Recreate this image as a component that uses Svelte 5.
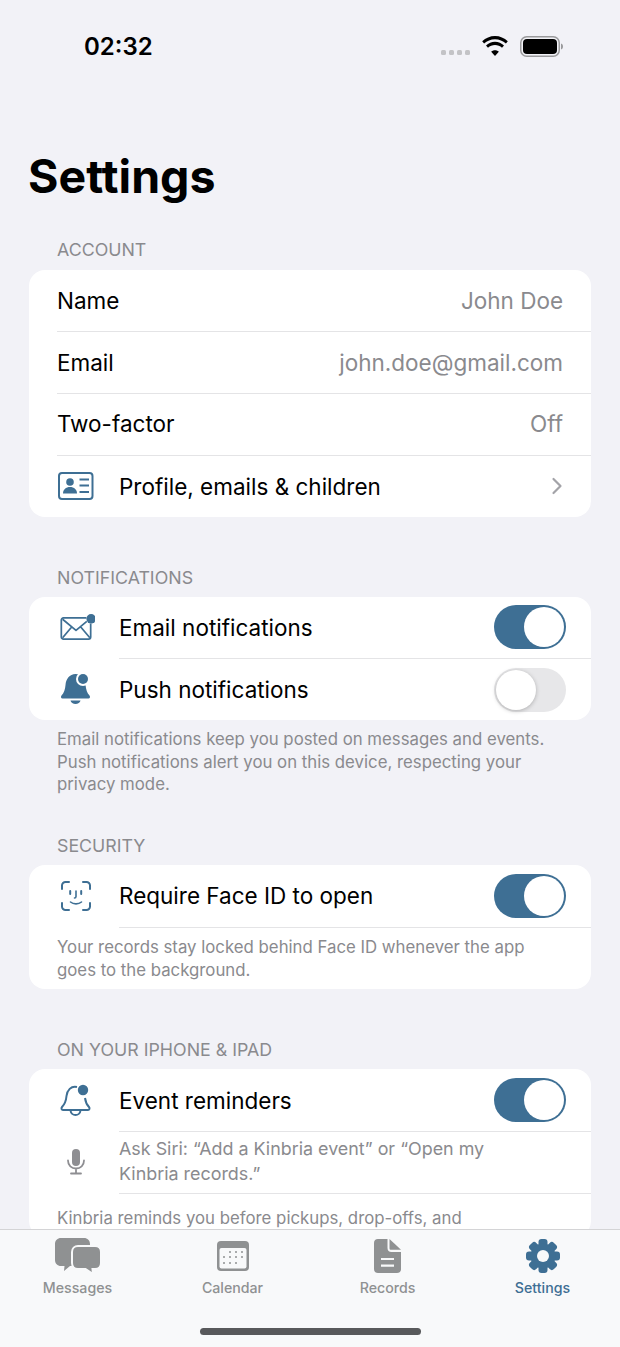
<script lang="ts">
	const tabs = [
		{ id: "messages", label: "Messages" },
		{ id: "calendar", label: "Calendar" },
		{ id: "records", label: "Records" },
		{ id: "settings", label: "Settings", active: true },
	];

	const calendarDots = [
		[13, 11], [19, 11], [25, 11],
		[7, 16], [13, 16], [19, 16], [25, 16],
		[7, 22], [13, 22], [19, 22],
	];
</script>

{#snippet toggle(on: boolean)}
	<span class="toggle" class:on><span class="knob"></span></span>
{/snippet}

<div class="screen">
	<div class="scroll">
		<div class="status">
			<span class="time">02:32</span>
			<span class="status-icons">
				<span class="dots"><i></i><i></i><i></i><i></i></span>
				<svg class="wifi" width="28" height="20" viewBox="0 0 28 20">
					<path d="M14 3.200c4.200 0 8 1.600 10.900 4.300l1.900-2.200C23.400 2 18.900 0 14 0S4.600 2 1.200 5.300l1.900 2.200C6 4.800 9.800 3.200 14 3.200z" />
					<path d="M14 9c2.700 0 5.100 1 7 2.700l2-2.200C20.500 7.200 17.400 5.800 14 5.800S7.500 7.200 5 9.500l2 2.200C8.900 10 11.300 9 14 9z" />
					<path d="M14 20l3.800-4.200c-1-1-2.300-1.500-3.800-1.500s-2.800.5-3.800 1.500z" />
				</svg>
				<svg class="battery" width="44" height="21" viewBox="0 0 44 21">
					<rect x="0.750" y="0.750" width="38.500" height="19.500" rx="6" fill="none" stroke="#9a9a9c" stroke-width="1.500" />
					<rect x="3" y="3" width="34" height="15" rx="4" fill="#000" />
					<path d="M41 7.500c1.300.4 2 1.500 2 3s-.7 2.600-2 3z" fill="#9a9a9c" />
				</svg>
			</span>
		</div>

		<h1>Settings</h1>

		<h2 class="first">ACCOUNT</h2>
		<section class="card">
			<div class="row">
				<div class="inner"><span class="label">Name</span><span class="value">John Doe</span></div>
			</div>
			<div class="row">
				<div class="inner"><span class="label">Email</span><span class="value">john.doe@gmail.com</span></div>
			</div>
			<div class="row">
				<div class="inner"><span class="label">Two-factor</span><span class="value">Off</span></div>
			</div>
			<div class="row">
				<span class="icon">
					<svg width="38" height="28" viewBox="0 0 38 28" fill="none" stroke="#3e6f94" stroke-width="2">
						<rect x="2" y="1" width="33.500" height="26" rx="3" />
						<circle cx="13" cy="10" r="3.800" fill="#3e6f94" stroke="none" />
						<path d="M6 21.500c0-4 3-6.500 7-6.500s7 2.500 7 6.500z" fill="#3e6f94" stroke="none" />
						<path d="M22.500 7.500h9.500M22.500 13.500h9.500M22.500 20h9.500" />
					</svg>
				</span>
				<div class="inner last">
					<span class="label">Profile, emails &amp; children</span>
					<svg class="chevron" width="12" height="18" viewBox="0 0 12 18" fill="none" stroke="#a3a3a8" stroke-width="2.200" stroke-linecap="round" stroke-linejoin="round">
						<path d="M2.500 2l7 7-7 7" />
					</svg>
				</div>
			</div>
		</section>

		<h2>NOTIFICATIONS</h2>
		<section class="card">
			<div class="row">
				<span class="icon">
					<svg width="44" height="30" viewBox="-4 0 44 30" fill="none" stroke="#3e6f94" stroke-width="2" stroke-linejoin="round">
						<path d="M30 4.500H3.500a2.500 2.500 0 0 0-2.500 2.500v19.500a2.500 2.500 0 0 0 2.500 2.500H32.500a2.500 2.500 0 0 0 2.500-2.500V11" />
						<path d="M2.500 6l15.500 13L30.500 8.500M2.500 27.500l10.500-12.500M34 27.500L23.500 15" />
						<circle cx="35.500" cy="5.500" r="5.500" fill="#3e6f94" stroke="none" />
					</svg>
				</span>
				<div class="inner">
					<span class="label">Email notifications</span>
					{@render toggle(true)}
				</div>
			</div>
			<div class="row">
				<span class="icon">
					<svg width="32" height="32" viewBox="0 0 32 32" fill="#3e6f94">
						<path d="M15.500 1c-6 0-9.500 5-10 11-.4 4.500-1.500 8-4 10.500-1 1.200-.5 3 1 3h26c1.500 0 2-1.800 1-3-2.500-2.500-3.500-6-4-11-.5-6-3.500-10.500-10-10.500z" />
						<circle cx="23" cy="6" r="7" fill="#fff" />
						<circle cx="23" cy="6" r="5" />
						<path d="M10.500 27.500h10c-.5 2-2.500 3.500-5 3.500s-4.500-1.500-5-3.500z" />
					</svg>
				</span>
				<div class="inner last">
					<span class="label">Push notifications</span>
					{@render toggle(false)}
				</div>
			</div>
		</section>
		<p class="footer">
			Email notifications keep you posted on messages and events.<br />
			Push notifications alert you on this device, respecting your<br />
			privacy mode.
		</p>

		<h2 class="after-footer">SECURITY</h2>
		<section class="card">
			<div class="row">
				<span class="icon">
					<svg width="30" height="30" viewBox="0 0 30 30" fill="none" stroke="#3e6f94" stroke-width="2" stroke-linecap="round">
						<path d="M1 8V4.500A3.500 3.500 0 0 1 4.500 1H8M22 1h3.500A3.500 3.500 0 0 1 29 4.500V8M29 22v3.500a3.500 3.500 0 0 1-3.500 3.500H22M8 29H4.500A3.500 3.500 0 0 1 1 25.500V22" />
						<path d="M9.200 10v3M20.200 10v3" />
						<path d="M15 10v5.500c0 1-.5 1.500-1.500 1.500M9.500 21c3 2.500 8 2.500 11 0" stroke-width="1.600" />
					</svg>
				</span>
				<div class="inner">
					<span class="label">Require Face ID to open</span>
					{@render toggle(true)}
				</div>
			</div>
			<p class="note">
				Your records stay locked behind Face ID whenever the app<br />
				goes to the background.
			</p>
		</section>

		<h2>ON YOUR IPHONE &amp; IPAD</h2>
		<section class="card">
			<div class="row">
				<span class="icon">
					<svg width="32" height="32" viewBox="0 0 32 32" fill="none" stroke="#3e6f94" stroke-width="2" stroke-linejoin="round">
						<path d="M17 3C11 1.500 7 6.500 6.500 12c-.4 4.500-1.500 8-4.500 11-1 1.200-.5 3 1 3h25c1.500 0 2-1.800 1-3-2.500-2.500-3.500-5.500-4-9" />
						<path d="M10.500 26.500c.3 2.800 2.600 4.500 5 4.500s4.700-1.700 5-4.500" />
						<circle cx="23" cy="6" r="5.200" fill="#3e6f94" stroke="none" />
					</svg>
				</span>
				<div class="inner">
					<span class="label">Event reminders</span>
					{@render toggle(true)}
				</div>
			</div>
			<div class="row">
				<span class="icon">
					<svg width="20" height="28" viewBox="0 0 20 28" fill="none" stroke="#8e8e92" stroke-width="1.800" stroke-linecap="round">
						<rect x="6" y="1" width="8" height="17" rx="4" fill="#8e8e92" stroke="none" />
						<path d="M2 12.500c0 5 3.500 8 8 8s8-3 8-8M10 20.500v5M5 25.500h10" />
					</svg>
				</span>
				<div class="inner siri">
					<span class="hint">Ask Siri: “Add a Kinbria event” or “Open my<br />Kinbria records.”</span>
				</div>
			</div>
			<p class="note cut">Kinbria reminds you before pickups, drop-offs, and</p>
		</section>
	</div>

	<nav class="tabbar">
		{#each tabs as tab}
			<div class="tab" class:active={tab.active}>
				<span class="tab-icon">
					{#if tab.id === "messages"}
						<svg width="46" height="36" viewBox="0 0 46 36" fill="#8f9192">
							<path d="M6 0h23c3.500 0 6 2.500 6 6v16c0 3.500-2.500 6-6 6H15l-6 5 .5-5H6c-3.500 0-6-2.500-6-6V6c0-3.500 2.500-6 6-6z" />
							<path d="M23 8h17c3.500 0 6 2.500 6 6v11c0 3.500-2.500 6-6 6h-2.500l.5 5-7.500-5H23c-3.500 0-6-2.500-6-6V14c0-3.500 2.500-6 6-6z" stroke="#f8f9fa" stroke-width="2" />
						</svg>
					{:else if tab.id === "calendar"}
						<svg width="32" height="30" viewBox="0 0 32 30">
							<rect width="32" height="30" rx="4" fill="#8f9192" />
							<rect x="2.500" y="7" width="27" height="20.500" rx="2" fill="#f8f9fa" />
							<g fill="#8f9192">
								{#each calendarDots as [cx, cy]}
									<circle {cx} {cy} r="1" />
								{/each}
							</g>
						</svg>
					{:else if tab.id === "records"}
						<svg width="27" height="34" viewBox="0 0 27 34">
							<path d="M4 0h9.500v9c0 2.500 1.500 4 4 4H27v17c0 2.500-1.500 4-4 4H4c-2.500 0-4-1.500-4-4V4c0-2.500 1.500-4 4-4z" fill="#8f9192" />
							<path d="M15.500 0L27 10.800H17c-1 0-1.500-.5-1.500-1.500z" fill="#8f9192" />
							<path d="M7 20h13M7 26.700h13" stroke="#f8f9fa" stroke-width="2.200" />
						</svg>
					{:else}
						<svg width="34" height="34" viewBox="0 0 34 34" fill="#3e6f94">
							{#each [0, 45, 90, 135] as angle}
								<rect x="12.500" y="0" width="9" height="34" rx="3" transform="rotate({angle} 17 17)" />
							{/each}
							<circle cx="17" cy="17" r="12.500" />
							<circle cx="17" cy="17" r="6" fill="#f8f9fa" />
						</svg>
					{/if}
				</span>
				<span class="tab-label">{tab.label}</span>
			</div>
		{/each}
		<span class="home"></span>
	</nav>
</div>

<style>
	:global(body) {
		background: #f2f2f7;
	}

	.screen {
		position: relative;
		width: 620px;
		height: 1347px;
		display: flex;
		flex-direction: column;
		overflow: hidden;
		background: #f2f2f7;
		font-family: Inter, "Liberation Sans", sans-serif;
		color: #000;
	}

	.scroll {
		flex: 1;
		min-height: 0;
		overflow: hidden;
		padding: 0 29px;
	}

	.status {
		height: 92px;
		display: flex;
		justify-content: space-between;
		align-items: center;
		padding: 0 27px 0 55px;
	}

	.time {
		font-size: 24px;
		font-weight: 600;
	}

	.status-icons {
		display: flex;
		align-items: center;
	}

	.dots {
		display: flex;
		gap: 3px;
		margin: 13px 11px 0 0;
	}

	.dots i {
		width: 5px;
		height: 5px;
		border-radius: 1.500px;
		background: #c3c3c6;
	}

	.wifi {
		margin-right: 11px;
	}

	h1 {
		margin: 0 0 0 -1px;
		padding-top: 57px;
		font-size: 46.500px;
		line-height: 55px;
		font-weight: 700;
	}

	h2 {
		margin: 50px 0 8px 28px;
		font-size: 17.800px;
		line-height: 22px;
		font-weight: 400;
		color: #8a8a8e;
	}

	h2.first {
		margin-top: 35px;
		margin-bottom: 8.500px;
	}

	h2.after-footer {
		margin-top: 39px;
		margin-bottom: 8.500px;
	}

	.card {
		background: #fff;
		border-radius: 16px;
		overflow: hidden;
	}

	.row {
		height: 61.750px;
		display: flex;
		align-items: stretch;
		padding-left: 28px;
	}

	.icon {
		width: 62px;
		flex: none;
		display: flex;
		align-items: center;
		justify-content: center;
		padding-right: 24px;
		box-sizing: border-box;
	}

	.inner {
		flex: 1;
		min-width: 0;
		display: flex;
		align-items: center;
		justify-content: space-between;
		padding-right: 28px;
		margin-bottom: -1px;
		border-bottom: 1px solid #e4e4e6;
	}

	.inner.last {
		border-bottom: none;
	}

	.inner.siri {
		padding-bottom: 2px;
	}

	.label,
	.value {
		margin-top: 1px;
		font-size: 22.500px;
		line-height: 28px;
	}

	.value {
		color: #8a8a8e;
	}

	.toggle {
		position: relative;
		flex: none;
		width: 72px;
		height: 44px;
		margin-right: -3px;
		border-radius: 22px;
		background: #e7e7e9;
	}

	.toggle.on {
		background: #3e6f94;
	}

	.knob {
		position: absolute;
		top: 2px;
		left: 2px;
		width: 40px;
		height: 40px;
		border-radius: 50%;
		background: #fff;
		box-shadow: 0 1px 4px rgba(0, 0, 0, 0.25);
	}

	.toggle.on .knob {
		left: 30px;
		box-shadow: none;
	}

	.footer,
	.note {
		margin: 0;
		font-size: 16.800px;
		line-height: 22.500px;
		color: #8a8a8e;
	}

	.footer {
		padding: 8px 28px 0;
	}

	.note {
		padding: 9.500px 28px 8px;
	}

	.note.cut {
		padding-top: 14px;
	}

	.hint {
		font-size: 17.900px;
		line-height: 25px;
		color: #8a8a8e;
	}

	.tabbar {
		position: relative;
		flex: none;
		height: 118px;
		box-sizing: border-box;
		display: grid;
		grid-template-columns: repeat(4, 155px);
		border-top: 1px solid #d4d4d6;
		background: #f8f9fa;
	}

	.tab {
		display: flex;
		flex-direction: column;
		align-items: center;
		color: #8f9192;
	}

	.tab.active {
		color: #3e6f94;
	}

	.tab-icon {
		height: 52px;
		display: flex;
		align-items: center;
	}

	.tab-label {
		margin-top: -3px;
		font-size: 14.200px;
		line-height: 18px;
		font-weight: 500;
	}

	.home {
		position: absolute;
		left: 200px;
		bottom: 12px;
		width: 221px;
		height: 7px;
		border-radius: 4px;
		background: #58595b;
	}
</style>
